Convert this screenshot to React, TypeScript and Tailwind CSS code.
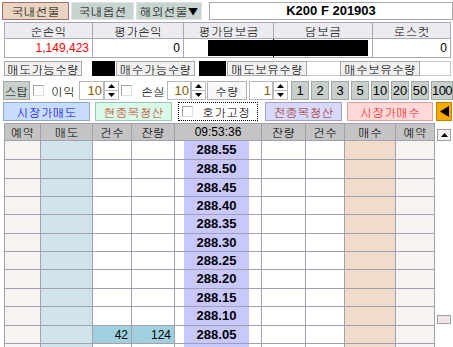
import React from "react";

const KR = "font-['Gulim','Noto_Sans_CJK_KR',sans-serif]";
const NUM = "font-['Liberation_Sans',sans-serif]";

function Up() {
  return (
    <svg width="7" height="4" viewBox="0 0 7 4"><polygon points="3.5,0 7,4 0,4" fill="#000" /></svg>
  );
}
function Down() {
  return (
    <svg width="7" height="4" viewBox="0 0 7 4"><polygon points="0,0 7,0 3.5,4" fill="#000" /></svg>
  );
}

function Spinner({ w, value }: { w: string; value: string }) {
  return (
    <div className={`flex h-full ${w}`}>
      <div className={`flex-1 bg-white border border-[#b8b8b8] flex items-center justify-end pr-[1px] text-[13px] text-[#806000] ${NUM}`}>{value}</div>
      <div className="w-[15px] flex flex-col shrink-0">
        <div className="flex-1 bg-white border border-[#b8b8b8] flex items-center justify-center"><Up /></div>
        <div className="flex-1 bg-white border border-t-0 border-[#b8b8b8] flex items-center justify-center"><Down /></div>
      </div>
    </div>
  );
}

function Check({ cls = "" }: { cls?: string }) {
  return <div className={`w-[11px] h-[11px] shrink-0 bg-white border border-[#a0a0a0] border-r-[#e0e0e0] border-b-[#e0e0e0] ${cls}`} />;
}

const cols = [
  { w: "w-[36px]", bg: "bg-[#f6f3f0]", br: true },
  { w: "w-[52px]", bg: "bg-[#d0e2ea]", br: true },
  { w: "w-[39px]", bg: "bg-white", br: true },
  { w: "w-[43px]", bg: "bg-white", br: true },
  { w: "w-[9px]", bg: "bg-white", br: false },
  { w: "w-[65px]", bg: "bg-[#c8c8ff]", br: false },
  { w: "w-[13px]", bg: "bg-white", br: true },
  { w: "w-[44px]", bg: "bg-white", br: true },
  { w: "w-[39px]", bg: "bg-white", br: true },
  { w: "w-[51px]", bg: "bg-[#f0dcc8]", br: true },
  { w: "w-[39px]", bg: "bg-[#f6f3f0]", br: true },
];

const prices = ["288.55", "288.50", "288.45", "288.40", "288.35", "288.30", "288.25", "288.20", "288.15", "288.10", "288.05", ""];
const heights = [19, 19, 18, 18, 19, 18, 18, 19, 18, 19, 18, 18];

export default function App() {
  return (
    <div className={`w-[453px] h-[347px] bg-white overflow-hidden text-black whitespace-nowrap ${KR}`}>
      {/* row 1 */}
      <div className="flex h-[18px] mt-[2px] text-[12px] *:shrink-0">
        <div className="ml-[2px] w-[67px] bg-[#e8d4c0] border border-[#a07070] flex items-center justify-center">국내선물</div>
        <div className="ml-[2px] w-[63px] bg-[#c8d4d0] border border-[#dde3e0] flex items-center justify-center">국내옵션</div>
        <div className="ml-[2px] w-[66px] bg-[#c8d4d0] border border-[#dde3e0] flex items-center justify-center">해외선물▼</div>
        <div className={`ml-[7px] w-[244px] bg-white border border-[#a8a8a8] flex items-center justify-center font-bold text-[13px] ${NUM}`}>K200 F 201903</div>
      </div>

      {/* row 2 table */}
      <div className="ml-[4px] mt-[2px] w-[447px] border border-[#a8a8b8]">
        <div className="flex h-[16px] bg-[#ececf0] border-b border-[#a8a8b8] text-[12px] *:shrink-0">
          <div className="w-[88px] border-r border-[#a8a8b8] flex items-center justify-center">순손익</div>
          <div className="w-[91px] border-r border-[#a8a8b8] flex items-center justify-center">평가손익</div>
          <div className="w-[90px] border-r border-[#a8a8b8] flex items-center justify-center">평가담보금</div>
          <div className="w-[99px] border-r border-[#a8a8b8] flex items-center justify-center">담보금</div>
          <div className="w-[77px] flex items-center justify-center">로스컷</div>
        </div>
        <div className={`flex h-[18px] bg-white text-[12px] *:shrink-0 ${NUM}`}>
          <div className="w-[88px] border-r border-[#a8a8b8] flex items-center justify-end pr-[3px] text-[#ff0000]">1,149,423</div>
          <div className="w-[91px] border-r border-[#a8a8b8] flex items-center justify-end pr-[3px]">0</div>
          <div className="w-[90px] border-r border-black flex items-stretch pl-[24px] py-[1px]">
            <div className="flex-1 bg-black" />
          </div>
          <div className="w-[99px] border-r border-[#a8a8b8] flex items-stretch pr-[4px] py-[1px]">
            <div className="flex-1 bg-black" />
          </div>
          <div className="w-[77px] flex items-center justify-end pr-[3px]">0</div>
        </div>
      </div>

      {/* row 3 */}
      <div className="flex h-[15px] mt-[3px] text-[12px] *:shrink-0">
        <div className="ml-[4px] w-[78px] bg-[#f0f0f0] border border-[#a8a8a8] flex items-center justify-center">매도가능수량</div>
        <div className="w-[34px] pl-[10px] pr-[1px] flex"><div className="flex-1 bg-black" /></div>
        <div className="w-[79px] bg-[#f0f0f0] border border-[#a8a8a8] flex items-center justify-center">매수가능수량</div>
        <div className="w-[32px] pl-[4px] pr-[1px] flex"><div className="flex-1 bg-black" /></div>
        <div className="w-[80px] bg-[#f0f0f0] border border-[#a8a8a8] flex items-center justify-center">매도보유수량</div>
        <div className="w-[33px] bg-white border-y border-[#c8c8c8]" />
        <div className="w-[80px] bg-[#f0f0f0] border border-[#a8a8a8] flex items-center justify-center">매수보유수량</div>
        <div className="w-[31px] bg-white border border-l-0 border-[#c8c8c8]" />
      </div>

      {/* row 4 */}
      <div className="flex h-[19px] mt-[5px] items-center text-[12px] *:shrink-0">
        <div className="ml-[3px] w-[27px] h-full bg-[#c8d0cc] border border-[#a0a8a4] flex items-center justify-center">스탑</div>
        <Check cls="ml-[3px]" />
        <div className="ml-[7px] w-[24px]">이익</div>
        <div className="ml-[4px] h-full"><Spinner w="w-[40px]" value="10" /></div>
        <Check cls="ml-[2px]" />
        <div className="ml-[9px] w-[24px]">손실</div>
        <div className="ml-[2px] h-full"><Spinner w="w-[39px]" value="10" /></div>
        <div className="ml-[1px] w-[40px] h-full bg-[#f8f8f8] border border-[#b0b0b0] flex items-center justify-center">수량</div>
        <div className="ml-[2px] h-full"><Spinner w="w-[39px]" value="1" /></div>
        <div className={`ml-[3px] flex h-full gap-[2px] text-[13px] *:shrink-0 ${NUM}`}>
          {["1", "2", "3", "5", "10", "20", "50"].map((b) => (
            <div key={b} className="w-[18px] bg-[#c8d0cc] border border-[#a0a8a4] flex items-center justify-center">{b}</div>
          ))}
          <div className="w-[22px] bg-[#c8d0cc] border border-[#a0a8a4] flex items-center justify-center tracking-[-0.5px]">100</div>
        </div>
      </div>

      {/* row 5 */}
      <div className="flex h-[19px] mt-[2px] text-[12px] *:shrink-0">
        <div className="ml-[3px] w-[87px] bg-[#c8dcff] border border-[#90a8d0] text-[#0000ff] flex items-center justify-center">시장가매도</div>
        <div className="ml-[5px] w-[77px] bg-[#d8f8e8] border border-[#98c8b0] text-[#c04020] flex items-center justify-center">현종목청산</div>
        <div className="ml-[6px] w-[80px] border border-dotted border-black flex items-center">
          <Check cls="ml-[3px]" />
          <span className="ml-[9px]">호가고정</span>
        </div>
        <div className="ml-[7px] w-[77px] bg-[#d8d8fc] border border-[#a0a0d0] text-[#a03020] flex items-center justify-center">전종목청산</div>
        <div className="ml-[5px] w-[86px] bg-[#ffd8d8] border border-[#e0a0a0] text-[#ff2020] flex items-center justify-center">시장가매수</div>
        <div className="ml-[3px] w-[16px] bg-[#f8a800] border border-[#c08000] flex items-center justify-center">
          <svg width="9" height="11" viewBox="0 0 9 11"><polygon points="9,0 9,11 0,5.5" fill="#000" /></svg>
        </div>
      </div>

      {/* order book */}
      <div className="flex mt-[2px] *:shrink-0">
        <div className="ml-[4px] border-l border-[#a0a0b0] flex flex-col">
          <div className="flex h-[18px] bg-[#c4c4c4] border-t border-b border-[#a0a0b0] text-[12px] *:shrink-0">
            <div className="w-[36px] border-r border-[#a0a0b0] flex items-center justify-center">예약</div>
            <div className="w-[52px] border-r border-[#a0a0b0] flex items-center justify-center">매도</div>
            <div className="w-[39px] border-r border-[#a0a0b0] flex items-center justify-center">건수</div>
            <div className="w-[43px] border-r border-[#a0a0b0] flex items-center justify-center">잔량</div>
            <div className={`w-[87px] border-r border-[#a0a0b0] flex items-center justify-center text-[12px] ${NUM}`}>09:53:36</div>
            <div className="w-[44px] border-r border-[#a0a0b0] flex items-center justify-center">잔량</div>
            <div className="w-[39px] border-r border-[#a0a0b0] flex items-center justify-center">건수</div>
            <div className="w-[51px] border-r border-[#a0a0b0] flex items-center justify-center">매수</div>
            <div className="w-[39px] border-r border-[#a0a0b0] flex items-center justify-center">예약</div>
          </div>
          {prices.map((p, r) => (
            <div key={r} className="flex shrink-0 *:shrink-0" style={{ height: heights[r] }}>
              {cols.map((c, i) => {
                const last = p === "288.05";
                let bg = c.bg;
                let content: React.ReactNode = null;
                if (i === 5 && p) content = <span className={`font-bold text-[13px] ${NUM}`}>{p}</span>;
                if (last && i === 2) { bg = "bg-[#a0d0e0]"; content = <span className={`text-[12px] ${NUM}`}>42</span>; }
                if (last && i === 3) { bg = "bg-[#a0d0e0]"; content = <span className={`text-[12px] ${NUM}`}>124</span>; }
                const align = i === 5 ? "justify-center" : "justify-end pr-[3px]";
                return (
                  <div
                    key={i}
                    className={`${c.w} ${bg} border-b border-[#a0a0b0] ${c.br ? "border-r" : ""} flex items-center ${align}`}
                  >
                    {content}
                  </div>
                );
              })}
            </div>
          ))}
        </div>
        <div className="w-[18px] bg-white flex flex-col items-center">
          <div className="mt-[6px] w-[14px] h-[12px] bg-[#f2eeee] border border-[#a0a0a0] flex items-center justify-center">
            <Up />
          </div>
          <div className="mt-[174px] w-[14px] h-[9px] bg-[#eee6e6] border border-[#a0a0a0]" />
        </div>
      </div>
    </div>
  );
}
